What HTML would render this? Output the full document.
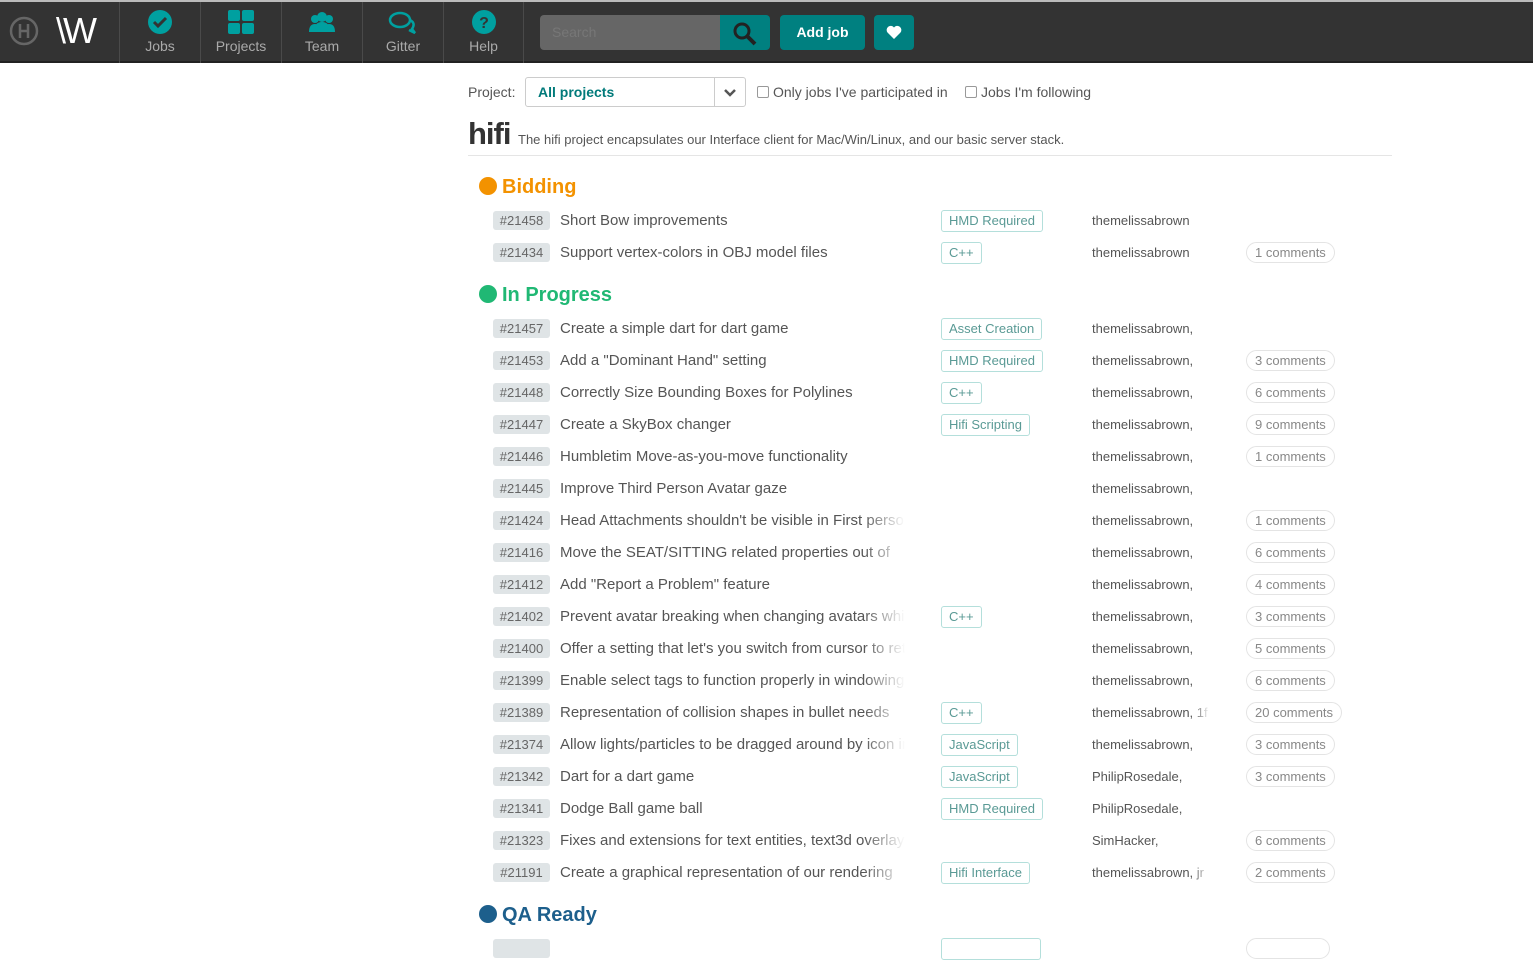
<!DOCTYPE html>
<html><head><meta charset="utf-8"><style>
*{box-sizing:border-box;margin:0;padding:0}
body{width:1533px;height:942px;overflow:hidden;background:#fff;font-family:"Liberation Sans",sans-serif;color:#555;position:relative}
.nav{position:absolute;left:0;top:0;width:1533px;height:63px;background:#333;border-top:2px solid #bbb;border-bottom:2px solid #222}
.ni{position:absolute;top:0;height:61px;width:81px;border-left:1px solid #4a4a4a;text-align:center;color:#aaa;font-size:14px}
.ni svg{display:block;margin:8px auto 4px}
.search{position:absolute;left:540px;top:13px;width:180px;height:35px;background:#666;border-radius:4px 0 0 4px;color:#777;font-size:14px;padding:9px 12px}
.sbtn{position:absolute;left:720px;top:13px;width:50px;height:35px;background:#008080;border-radius:0 4px 4px 0}
.add{position:absolute;left:780px;top:13px;width:85px;height:35px;background:#008080;border-radius:4px;color:#fff;font-weight:bold;font-size:14px;text-align:center;line-height:35px}
.fav{position:absolute;left:874px;top:13px;width:40px;height:35px;background:#008080;border-radius:4px}
.abs{position:absolute}
.row{position:absolute;left:493px;height:22px;width:900px;font-size:15px}
.id{position:absolute;left:0;top:1px;height:19px;width:57px;background:#dfe4e6;border-radius:3px;font-size:13px;color:#666;text-align:center;line-height:19px}
.t{position:absolute;left:67px;top:2px;width:345px;white-space:nowrap;overflow:hidden;color:#555;-webkit-mask-image:linear-gradient(to right,#000 88%,transparent);mask-image:linear-gradient(to right,#000 88%,transparent)}
.tag{position:absolute;left:448px;top:0;height:22px;border:1px solid #b4dfdb;border-radius:3px;font-size:13px;color:#5a9a95;padding:0 7px;line-height:20px}
.u{position:absolute;left:599px;top:3px;font-size:13px;color:#555;width:118px;white-space:nowrap;overflow:hidden;-webkit-mask-image:linear-gradient(to right,#000 85%,transparent);mask-image:linear-gradient(to right,#000 85%,transparent)}
.c{position:absolute;left:753px;top:0;height:21px;border:1px solid #e4e4e4;border-radius:11px;font-size:13px;color:#888;padding:0 8px;line-height:19px}
.h{position:absolute;left:479px;font-size:20px;font-weight:bold}
.h i{display:inline-block;width:18px;height:18px;border-radius:50%;vertical-align:-2px;margin-right:5px}
</style></head><body>
<div class="nav">
<svg class="abs" style="left:9px;top:14px" width="30" height="30" viewBox="0 0 30 30"><circle cx="15" cy="15" r="13" fill="none" stroke="#666" stroke-width="2.5"/><path d="M11 8v14M19 8v14M11 15h8" stroke="#666" stroke-width="2.5" fill="none"/></svg>
<div class="abs" style="left:56px;top:8px;color:#fff;font-size:36px;letter-spacing:-3px">\W</div>
<div class="ni" style="left:119px"><svg width="24" height="24"><circle cx="12" cy="12" r="12" fill="#00a0a0"/><path d="M6 12l4 4 8-8" stroke="#333" stroke-width="3" fill="none"/></svg>Jobs</div>
<div class="ni" style="left:200px"><svg width="26" height="24"><rect x="0" y="0" width="12" height="11" rx="2" fill="#00a0a0"/><rect x="14" y="0" width="12" height="11" rx="2" fill="#00a0a0"/><rect x="0" y="13" width="12" height="11" rx="2" fill="#00a0a0"/><rect x="14" y="13" width="12" height="11" rx="2" fill="#00a0a0"/></svg>Projects</div>
<div class="ni" style="left:281px"><svg width="30" height="24"><circle cx="8" cy="9" r="4" fill="#00a0a0"/><circle cx="22" cy="9" r="4" fill="#00a0a0"/><circle cx="15" cy="7" r="5" fill="#00a0a0"/><path d="M2 22q0-8 6-8t6 8zM16 22q0-8 6-8t6 8zM7 22q0-10 8-10t8 10z" fill="#00a0a0"/></svg>Team</div>
<div class="ni" style="left:362px"><svg width="30" height="24"><ellipse cx="12" cy="10" rx="10" ry="7" fill="none" stroke="#00a0a0" stroke-width="2.5"/><path d="M22 10q6 3 2 9l3 4-6-3" fill="none" stroke="#00a0a0" stroke-width="2.5"/></svg>Gitter</div>
<div class="ni" style="left:443px;border-right:1px solid #4a4a4a"><svg width="24" height="24"><circle cx="12" cy="12" r="12" fill="#00a0a0"/><text x="12" y="18" font-size="16" font-weight="bold" fill="#333" text-anchor="middle" font-family="Liberation Sans">?</text></svg>Help</div>
<div class="search">Search</div>
<div class="sbtn"><svg style="margin:7px 0 0 13px" width="24" height="24"><circle cx="9" cy="9" r="7" fill="none" stroke="#222" stroke-width="3"/><path d="M14 14l8 8" stroke="#222" stroke-width="4"/></svg></div>
<div class="add">Add job</div>
<div class="fav"><svg style="margin:10px 0 0 12px" width="16" height="14" viewBox="0 0 16 14"><path d="M8 14L1.5 7.5A4 4 0 0 1 8 2.5a4 4 0 0 1 6.5 5z" fill="#fff"/></svg></div>
</div>
<div class="abs" style="left:468px;top:84px;font-size:14px;color:#555">Project:</div>
<div class="abs" style="left:525px;top:77px;width:221px;height:30px;border:1px solid #ccc;border-radius:3px"><span class="abs" style="left:12px;top:6px;font-weight:bold;font-size:14px;color:#007a7a">All projects</span><span class="abs" style="left:188px;top:0;width:1px;height:28px;background:#ccc"></span><svg class="abs" style="left:197px;top:10px" width="14" height="10"><path d="M2 2l5 5 5-5" stroke="#555" stroke-width="2.5" fill="none"/></svg></div>
<div class="abs" style="left:757px;top:86px;width:12px;height:12px;border:1px solid #999;border-radius:2px"></div>
<div class="abs" style="left:773px;top:84px;font-size:14px;color:#555">Only jobs I've participated in</div>
<div class="abs" style="left:965px;top:86px;width:12px;height:12px;border:1px solid #999;border-radius:2px"></div>
<div class="abs" style="left:981px;top:84px;font-size:14px;color:#555">Jobs I'm following</div>
<div class="abs" style="left:468px;top:116px;font-size:31px;color:#333;font-weight:bold;letter-spacing:-1px">hifi</div>
<div class="abs" style="left:518px;top:132px;font-size:13px;color:#555">The hifi project encapsulates our Interface client for Mac/Win/Linux, and our basic server stack.</div>
<div class="abs" style="left:468px;top:155px;width:924px;height:1px;background:#e5e5e5"></div>
<div class="h" style="top:176px;color:#f39200"><i style="background:#f39200"></i>Bidding</div>
<div class="h" style="top:284px;color:#20b874"><i style="background:#20b874"></i>In Progress</div>
<div class="h" style="top:904px;color:#1d5f8c"><i style="background:#1d5f8c"></i>QA Ready</div>
<div class="row" style="top:210px"><span class="id">#21458</span><span class="t">Short Bow improvements</span><span class="tag">HMD Required</span><span class="u">themelissabrown</span></div>
<div class="row" style="top:242px"><span class="id">#21434</span><span class="t">Support vertex-colors in OBJ model files</span><span class="tag">C++</span><span class="u">themelissabrown</span><span class="c">1 comments</span></div>
<div class="row" style="top:318px"><span class="id">#21457</span><span class="t">Create a simple dart for dart game</span><span class="tag">Asset Creation</span><span class="u">themelissabrown,</span></div>
<div class="row" style="top:350px"><span class="id">#21453</span><span class="t">Add a "Dominant Hand" setting</span><span class="tag">HMD Required</span><span class="u">themelissabrown,</span><span class="c">3 comments</span></div>
<div class="row" style="top:382px"><span class="id">#21448</span><span class="t">Correctly Size Bounding Boxes for Polylines</span><span class="tag">C++</span><span class="u">themelissabrown,</span><span class="c">6 comments</span></div>
<div class="row" style="top:414px"><span class="id">#21447</span><span class="t">Create a SkyBox changer</span><span class="tag">Hifi Scripting</span><span class="u">themelissabrown,</span><span class="c">9 comments</span></div>
<div class="row" style="top:446px"><span class="id">#21446</span><span class="t">Humbletim Move-as-you-move functionality</span><span class="u">themelissabrown,</span><span class="c">1 comments</span></div>
<div class="row" style="top:478px"><span class="id">#21445</span><span class="t">Improve Third Person Avatar gaze</span><span class="u">themelissabrown,</span></div>
<div class="row" style="top:510px"><span class="id">#21424</span><span class="t">Head Attachments shouldn't be visible in First person</span><span class="u">themelissabrown,</span><span class="c">1 comments</span></div>
<div class="row" style="top:542px"><span class="id">#21416</span><span class="t">Move the SEAT/SITTING related properties out of</span><span class="u">themelissabrown,</span><span class="c">6 comments</span></div>
<div class="row" style="top:574px"><span class="id">#21412</span><span class="t">Add "Report a Problem" feature</span><span class="u">themelissabrown,</span><span class="c">4 comments</span></div>
<div class="row" style="top:606px"><span class="id">#21402</span><span class="t">Prevent avatar breaking when changing avatars while</span><span class="tag">C++</span><span class="u">themelissabrown,</span><span class="c">3 comments</span></div>
<div class="row" style="top:638px"><span class="id">#21400</span><span class="t">Offer a setting that let's you switch from cursor to reticle</span><span class="u">themelissabrown,</span><span class="c">5 comments</span></div>
<div class="row" style="top:670px"><span class="id">#21399</span><span class="t">Enable select tags to function properly in windowing</span><span class="u">themelissabrown,</span><span class="c">6 comments</span></div>
<div class="row" style="top:702px"><span class="id">#21389</span><span class="t">Representation of collision shapes in bullet needs</span><span class="tag">C++</span><span class="u">themelissabrown, 1f</span><span class="c">20 comments</span></div>
<div class="row" style="top:734px"><span class="id">#21374</span><span class="t">Allow lights/particles to be dragged around by icon in</span><span class="tag">JavaScript</span><span class="u">themelissabrown,</span><span class="c">3 comments</span></div>
<div class="row" style="top:766px"><span class="id">#21342</span><span class="t">Dart for a dart game</span><span class="tag">JavaScript</span><span class="u">PhilipRosedale,</span><span class="c">3 comments</span></div>
<div class="row" style="top:798px"><span class="id">#21341</span><span class="t">Dodge Ball game ball</span><span class="tag">HMD Required</span><span class="u">PhilipRosedale,</span></div>
<div class="row" style="top:830px"><span class="id">#21323</span><span class="t">Fixes and extensions for text entities, text3d overlays</span><span class="u">SimHacker,</span><span class="c">6 comments</span></div>
<div class="row" style="top:862px"><span class="id">#21191</span><span class="t">Create a graphical representation of our rendering</span><span class="tag">Hifi Interface</span><span class="u">themelissabrown, jr</span><span class="c">2 comments</span></div>
<div class="row" style="top:938px"><span class="id"></span><span class="tag" style="width:100px"></span><span class="c" style="width:84px"></span></div>
</body></html>
